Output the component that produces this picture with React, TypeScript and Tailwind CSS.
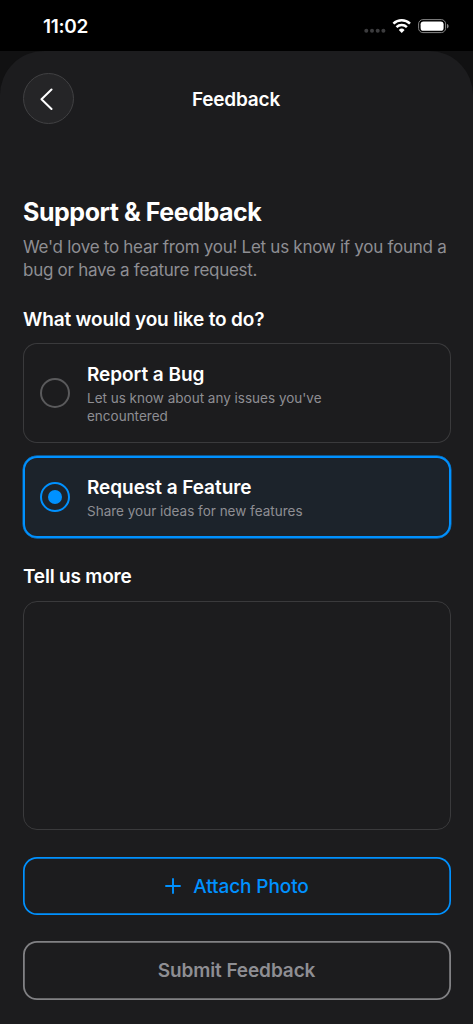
import { useState } from "react";

const options = [
  {
    id: "bug",
    title: "Report a Bug",
    description: "Let us know about any issues you've encountered",
    box: "h-[100px]",
  },
  {
    id: "feature",
    title: "Request a Feature",
    description: "Share your ideas for new features",
    box: "h-[82px]",
  },
];

const StatusBar = () => (
  <div className="flex h-[51px] shrink-0 items-start justify-between bg-black pl-[43px] pr-[24px] pt-[17px]">
    <span className="text-[19px] font-semibold leading-[20px] tracking-[-0.3px]">
      11:02
    </span>
    <svg width="86" height="18" viewBox="0 0 86 18" fill="none">
      <g fill="#3c3c3e">
        <circle cx="3.3" cy="13.8" r="2" />
        <circle cx="9" cy="13.8" r="2" />
        <circle cx="14.7" cy="13.8" r="2" />
        <circle cx="20.4" cy="13.8" r="2" />
      </g>
      <g stroke="#fff" strokeWidth="2.5">
        <path d="M30.4 6.7a12 12 0 0 1 16.6 0" />
        <path d="M33.5 10.1a7.5 7.5 0 0 1 10.4 0" />
      </g>
      <path d="M38.7 15.9l-2.900-2.900a4.200 4.200 0 0 1 5.800 0z" fill="#fff" />
      <rect x="55.6" y="2.6" width="27" height="13" rx="4.3" stroke="#858585" />
      <rect x="57.6" y="4.4" width="23" height="9.4" rx="2.9" fill="#fff" />
      <path d="M84 7v4.4c1-.4 1.6-1.2 1.6-2.2S85 7.4 84 7z" fill="#858585" />
    </svg>
  </div>
);

const App = () => {
  const [selected, setSelected] = useState("feature");
  const [message, setMessage] = useState("");

  return (
    <div className="flex h-[1024px] w-[473px] flex-col overflow-hidden bg-[#111112] font-['Inter',sans-serif] text-white">
      <StatusBar />
      <div className="flex-1 rounded-t-[44px] bg-[#1c1c1e] pl-[23px] pr-[22px] pt-[22px]">
        <header className="grid h-[51px] grid-cols-[51px_1fr_51px] items-center">
          <button
            type="button"
            aria-label="Back"
            className="flex size-[51px] items-center justify-center rounded-full border border-[#414143] bg-[#252527]"
          >
            <svg width="14" height="22" viewBox="0 0 14 22" fill="none" className="-ml-[3px]">
              <path
                d="M11.5 1.5L1.500 11.300l10 9.700"
                stroke="#fff"
                strokeWidth="2"
                strokeLinecap="round"
                strokeLinejoin="round"
              />
            </svg>
          </button>
          <h1 className="pr-[2px] pt-[2px] text-center text-[19px] font-semibold leading-6 tracking-[-0.2px]">
            Feedback
          </h1>
        </header>

        <h2 className="mt-[73px] text-[25px] font-bold leading-[30px] tracking-[-0.45px]">
          Support &amp; Feedback
        </h2>
        <p className="mt-[9px] whitespace-nowrap text-[17px] leading-[23px] tracking-[-0.27px] text-[#8e8e93]">
          We'd love to hear from you! Let us know if you found a
          <br />
          bug or have a feature request.
        </p>

        <h3 className="mt-[26px] text-[19px] font-semibold leading-6 tracking-[-0.17px]">
          What would you like to do?
        </h3>
        <div className="mt-[11px] flex flex-col gap-[13px]">
          {options.map((option) => {
            const active = option.id === selected;
            return (
              <button
                key={option.id}
                type="button"
                onClick={() => setSelected(option.id)}
                className={`flex items-center rounded-[14px] pl-[17px] text-left ${option.box} ${
                  active
                    ? "bg-[#1c232b] shadow-[inset_0_0_0_2px_#0091ff,0_0_0_0.4px_#0091ff]"
                    : "shadow-[inset_0_0_0_1px_#3a3a3c]"
                }`}
              >
                <span
                  className={`flex size-[30px] shrink-0 items-center justify-center rounded-full border-2 ${
                    active ? "border-[#0091ff]" : "border-[#5a5a5c]"
                  }`}
                >
                  {active && (
                    <span className="size-[14px] rounded-full bg-[#0091ff]" />
                  )}
                </span>
                <span className="ml-[17px] block w-[270px] pt-[2px]">
                  <span className="block text-[19px] font-semibold leading-6 tracking-[-0.05px]">
                    {option.title}
                  </span>
                  <span className="mt-[2px] block text-[13.5px] leading-[18px] text-[#8e8e93]">
                    {option.description}
                  </span>
                </span>
              </button>
            );
          })}
        </div>

        <h3 className="mt-[27px] text-[19px] font-semibold leading-6 tracking-[-0.2px]">
          Tell us more
        </h3>
        <textarea
          value={message}
          onChange={(e) => setMessage(e.target.value)}
          className="mt-[12px] block h-[229px] w-full resize-none rounded-[14px] border border-[#3a3a3c] p-3 text-[19px] outline-none"
        />

        <button
          type="button"
          className="mt-[27px] flex h-[58px] w-full items-center justify-center rounded-[14px] pt-[2px] text-[19px] font-medium tracking-[-0.1px] text-[#0091ff] shadow-[inset_0_0_0_1.7px_#0091ff]"
        >
          <svg width="16" height="16" viewBox="0 0 16 16" className="-mt-[3px] mr-3">
            <path
              d="M8 1v14M1 8h14"
              stroke="currentColor"
              strokeWidth="1.9"
              strokeLinecap="round"
            />
          </svg>
          Attach Photo
        </button>
        <button
          type="button"
          className="mt-[26px] flex h-[59px] w-full items-center justify-center rounded-[14px] pr-px pt-[2px] text-[19px] font-semibold tracking-[-0.1px] text-[#8e8e93] shadow-[inset_0_0_0_1.8px_#818184]"
        >
          Submit Feedback
        </button>
      </div>
    </div>
  );
};

export default App;
